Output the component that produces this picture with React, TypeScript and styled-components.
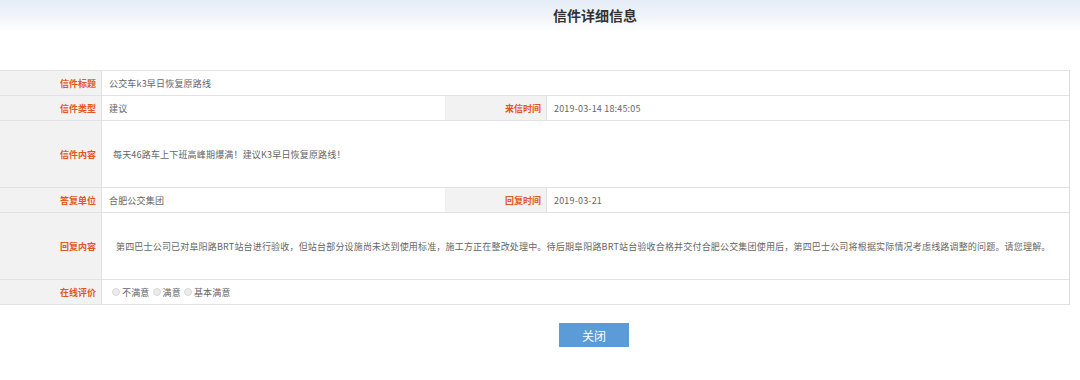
import React from "react";
import styled, { createGlobalStyle } from "styled-components";

const Global = createGlobalStyle`
  html, body { margin: 0; padding: 0; background: #fff; }
  body { font-family: "Noto Sans CJK SC", "Noto Sans", sans-serif; }
`;

const Page = styled.div`
  width: 1080px;
  height: 380px;
  background: #fff;
  overflow: hidden;
`;

const Header = styled.div`
  height: 32px;
  background: linear-gradient(to bottom, #e5ecf6 0%, #f1f5fa 55%, #ffffff 100%);
  display: flex;
  align-items: flex-start;
  justify-content: center;
  padding-left: 110px;
  box-sizing: border-box;
`;

const Title = styled.h1`
  margin: 6px 0 0;
  font-size: 14px;
  line-height: 18px;
  font-weight: bold;
  color: #333;
`;

const Table = styled.div`
  margin-top: 38px;
  width: 1070px;
  border-top: 1px solid #e4e4e4;
  border-right: 1px solid #dcdcdc;
  box-sizing: border-box;
`;

const Row = styled.div<{ $h: number; $split?: boolean }>`
  display: grid;
  grid-template-columns: ${(p) => (p.$split ? "102px 343px 102px 1fr" : "102px 1fr")};
  height: ${(p) => p.$h}px;
  border-bottom: 1px solid #e2e2e2;
  box-sizing: border-box;
`;

const Label = styled.div`
  background: #f2f2f2;
  border-right: 1px solid #e0e0e0;
  color: #e2561f;
  font-size: 9px;
  font-weight: bold;
  display: flex;
  align-items: center;
  justify-content: flex-end;
  padding-right: 5px;
  box-sizing: border-box;
`;

const Value = styled.div<{ $pad?: number }>`
  background: #fff;
  color: #666;
  font-size: 9px;
  letter-spacing: 0.18px;
  display: flex;
  align-items: center;
  padding-left: ${(p) => p.$pad ?? 7}px;
  box-sizing: border-box;
  white-space: nowrap;
`;

const Radio = styled.label`
  display: inline-flex;
  align-items: center;
  margin-right: 3px;
  color: #666;
  font-size: 9px;
`;

const Dot = styled.span`
  width: 8px;
  height: 8px;
  border-radius: 50%;
  background: #ececec;
  border: 1px solid #d8d8d8;
  box-sizing: border-box;
  margin-right: 2px;
`;

const Actions = styled.div`
  display: flex;
  justify-content: center;
  padding-left: 108px;
  margin-top: 18px;
`;

const Button = styled.button`
  width: 70px;
  height: 24px;
  border: none;
  background: #5b9bd8;
  color: #fff;
  font-family: "Noto Sans CJK SC", sans-serif;
  font-size: 12px;
  padding: 0;
  cursor: pointer;
`;

export default function App() {
  return (
    <Page>
      <Global />
      <Header>
        <Title>信件详细信息</Title>
      </Header>
      <Table>
        <Row $h={25}>
          <Label>信件标题</Label>
          <Value>公交车k3早日恢复原路线</Value>
        </Row>
        <Row $h={25} $split>
          <Label>信件类型</Label>
          <Value>建议</Value>
          <Label>来信时间</Label>
          <Value>2019-03-14 18:45:05</Value>
        </Row>
        <Row $h={67}>
          <Label>信件内容</Label>
          <Value $pad={11}>每天46路车上下班高峰期爆满！建议K3早日恢复原路线！</Value>
        </Row>
        <Row $h={25} $split>
          <Label>答复单位</Label>
          <Value>合肥公交集团</Value>
          <Label>回复时间</Label>
          <Value>2019-03-21</Value>
        </Row>
        <Row $h={67}>
          <Label>回复内容</Label>
          <Value $pad={14}>
            第四巴士公司已对阜阳路BRT站台进行验收，但站台部分设施尚未达到使用标准，施工方正在整改处理中。待后期阜阳路BRT站台验收合格并交付合肥公交集团使用后，第四巴士公司将根据实际情况考虑线路调整的问题。请您理解。
          </Value>
        </Row>
        <Row $h={25}>
          <Label>在线评价</Label>
          <Value $pad={10}>
            <Radio><Dot />不满意</Radio>
            <Radio><Dot />满意</Radio>
            <Radio><Dot />基本满意</Radio>
          </Value>
        </Row>
      </Table>
      <Actions>
        <Button>关闭</Button>
      </Actions>
    </Page>
  );
}
